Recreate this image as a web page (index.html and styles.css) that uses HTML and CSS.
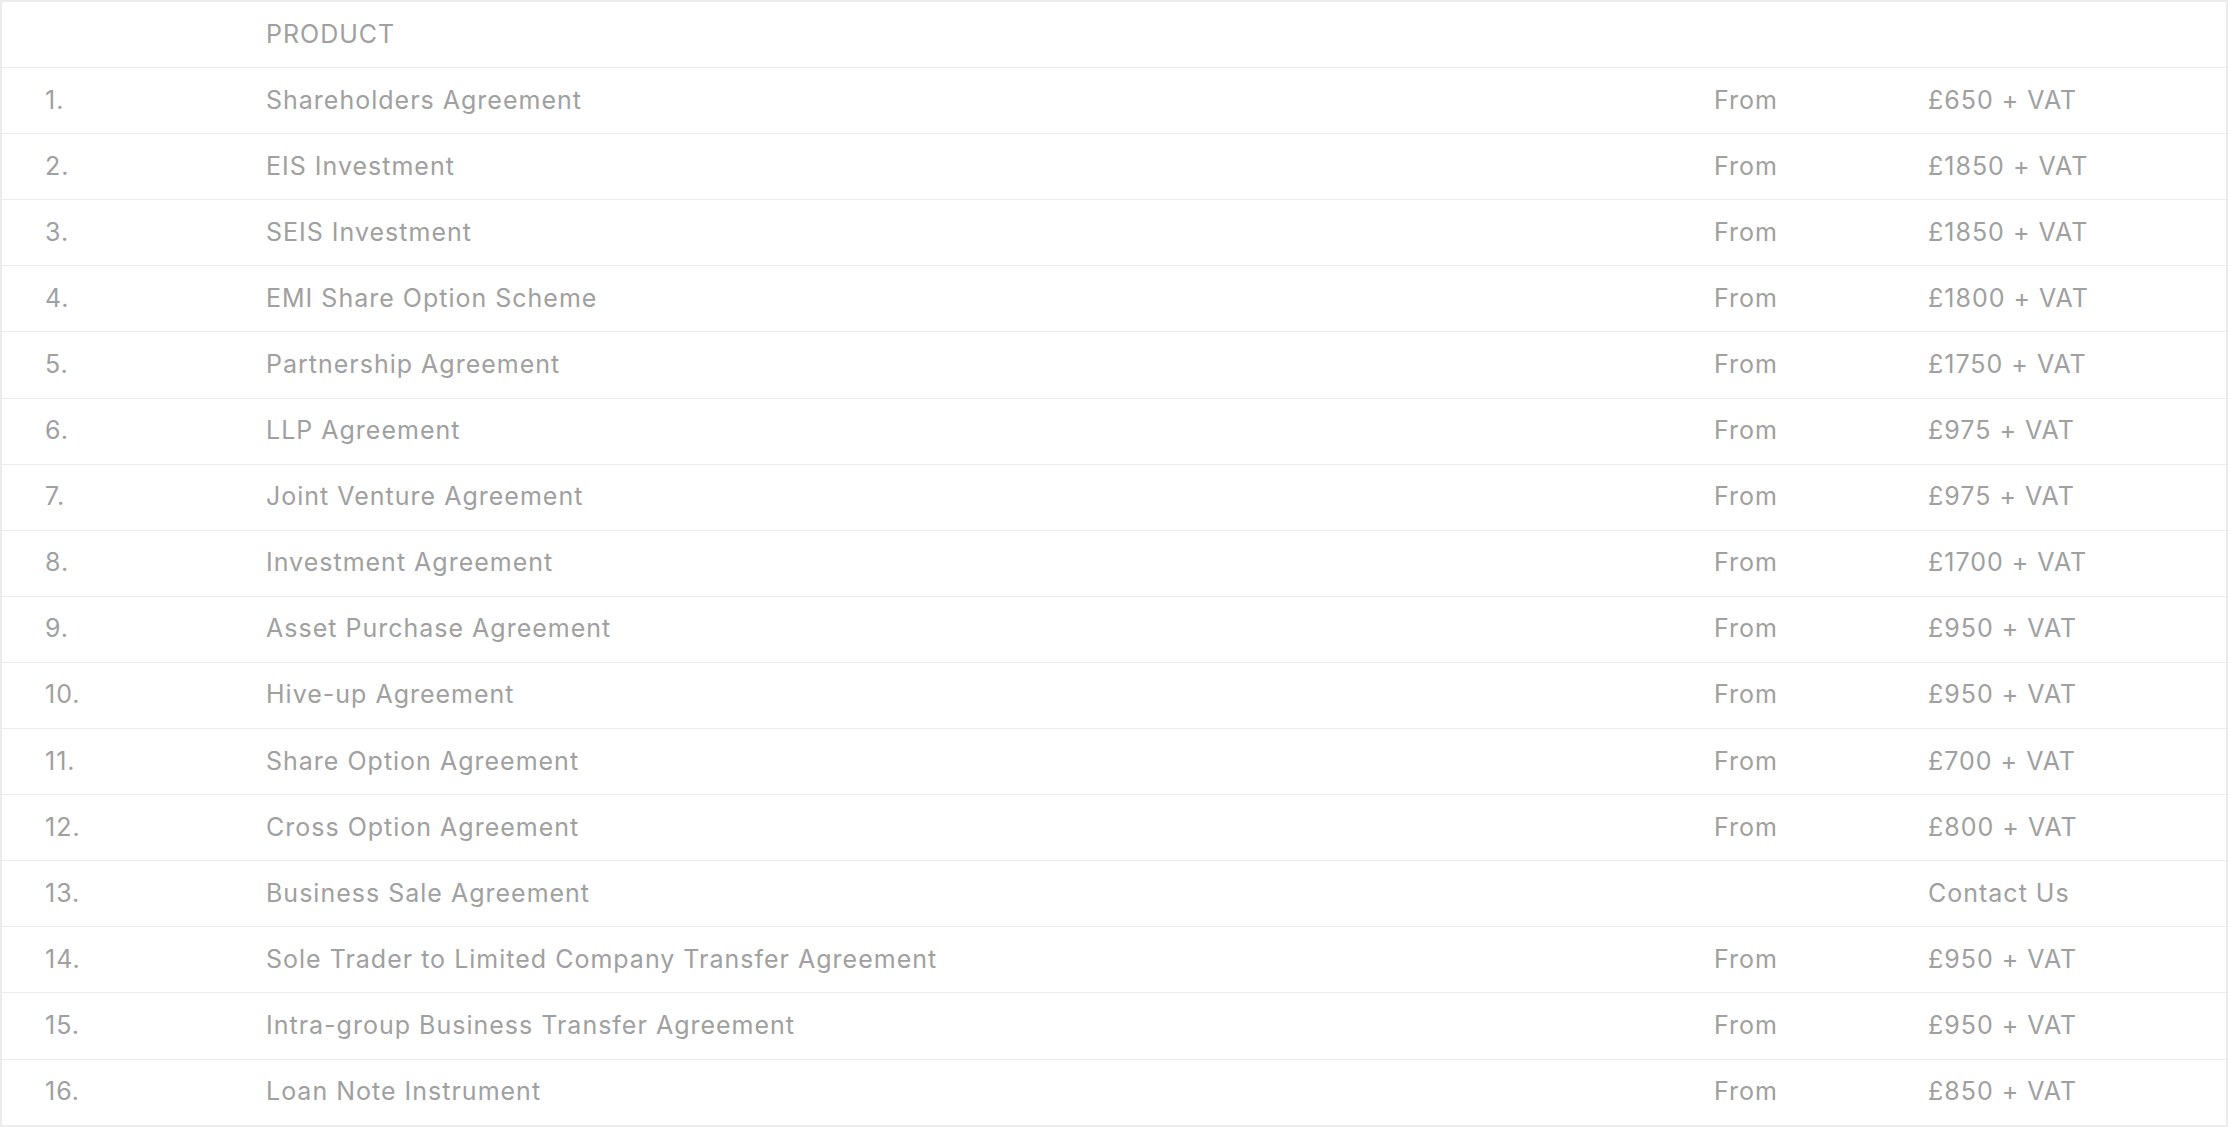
FILE: index.html
```html
<!DOCTYPE html>
<html lang="en">
<head>
<meta charset="utf-8">
<title>Products</title>
<link rel="stylesheet" href="styles.css">
</head>
<body>
<table class="price-table">
  <colgroup>
    <col class="col-num">
    <col class="col-product">
    <col class="col-from">
    <col class="col-price">
  </colgroup>
  <thead>
    <tr><th></th><th>PRODUCT</th><th></th><th></th></tr>
  </thead>
  <tbody>
    <tr><td>1.</td><td>Shareholders Agreement</td><td>From</td><td>£650 + VAT</td></tr>
    <tr><td>2.</td><td>EIS Investment</td><td>From</td><td>£1850 + VAT</td></tr>
    <tr><td>3.</td><td>SEIS Investment</td><td>From</td><td>£1850 + VAT</td></tr>
    <tr><td>4.</td><td>EMI Share Option Scheme</td><td>From</td><td>£1800 + VAT</td></tr>
    <tr><td>5.</td><td>Partnership Agreement</td><td>From</td><td>£1750 + VAT</td></tr>
    <tr><td>6.</td><td>LLP Agreement</td><td>From</td><td>£975 + VAT</td></tr>
    <tr><td>7.</td><td>Joint Venture Agreement</td><td>From</td><td>£975 + VAT</td></tr>
    <tr><td>8.</td><td>Investment Agreement</td><td>From</td><td>£1700 + VAT</td></tr>
    <tr><td>9.</td><td>Asset Purchase Agreement</td><td>From</td><td>£950 + VAT</td></tr>
    <tr><td>10.</td><td>Hive-up Agreement</td><td>From</td><td>£950 + VAT</td></tr>
    <tr><td>11.</td><td>Share Option Agreement</td><td>From</td><td>£700 + VAT</td></tr>
    <tr><td>12.</td><td>Cross Option Agreement</td><td>From</td><td>£800 + VAT</td></tr>
    <tr><td>13.</td><td>Business Sale Agreement</td><td></td><td>Contact Us</td></tr>
    <tr><td>14.</td><td>Sole Trader to Limited Company Transfer Agreement</td><td>From</td><td>£950 + VAT</td></tr>
    <tr><td>15.</td><td>Intra-group Business Transfer Agreement</td><td>From</td><td>£950 + VAT</td></tr>
    <tr><td>16.</td><td>Loan Note Instrument</td><td>From</td><td>£850 + VAT</td></tr>
  </tbody>
</table>
</body>
</html>
```
FILE: styles.css
```css
html, body {
  margin: 0;
  padding: 0;
  background: #ffffff;
}

.price-table {
  width: 2228px;
  border-collapse: collapse;
  table-layout: fixed;
  border: 2px solid #ececec;
  font-family: Inter, "Noto Sans", sans-serif;
  font-size: 25px;
  letter-spacing: 0.04em;
  color: #a0a0a0;
}

.col-num { width: 265px; }
.col-product { width: 1448px; }
.col-from { width: 214px; }
.col-price { width: auto; }

.price-table th,
.price-table td {
  height: 63.1px;
  padding: 0 0 2px 0;
  text-align: left;
  vertical-align: middle;
  font-weight: 400;
  border-bottom: 1px solid #ececec;
  white-space: nowrap;
}

.price-table th:first-child,
.price-table td:first-child {
  padding-left: 43px;
}
```
